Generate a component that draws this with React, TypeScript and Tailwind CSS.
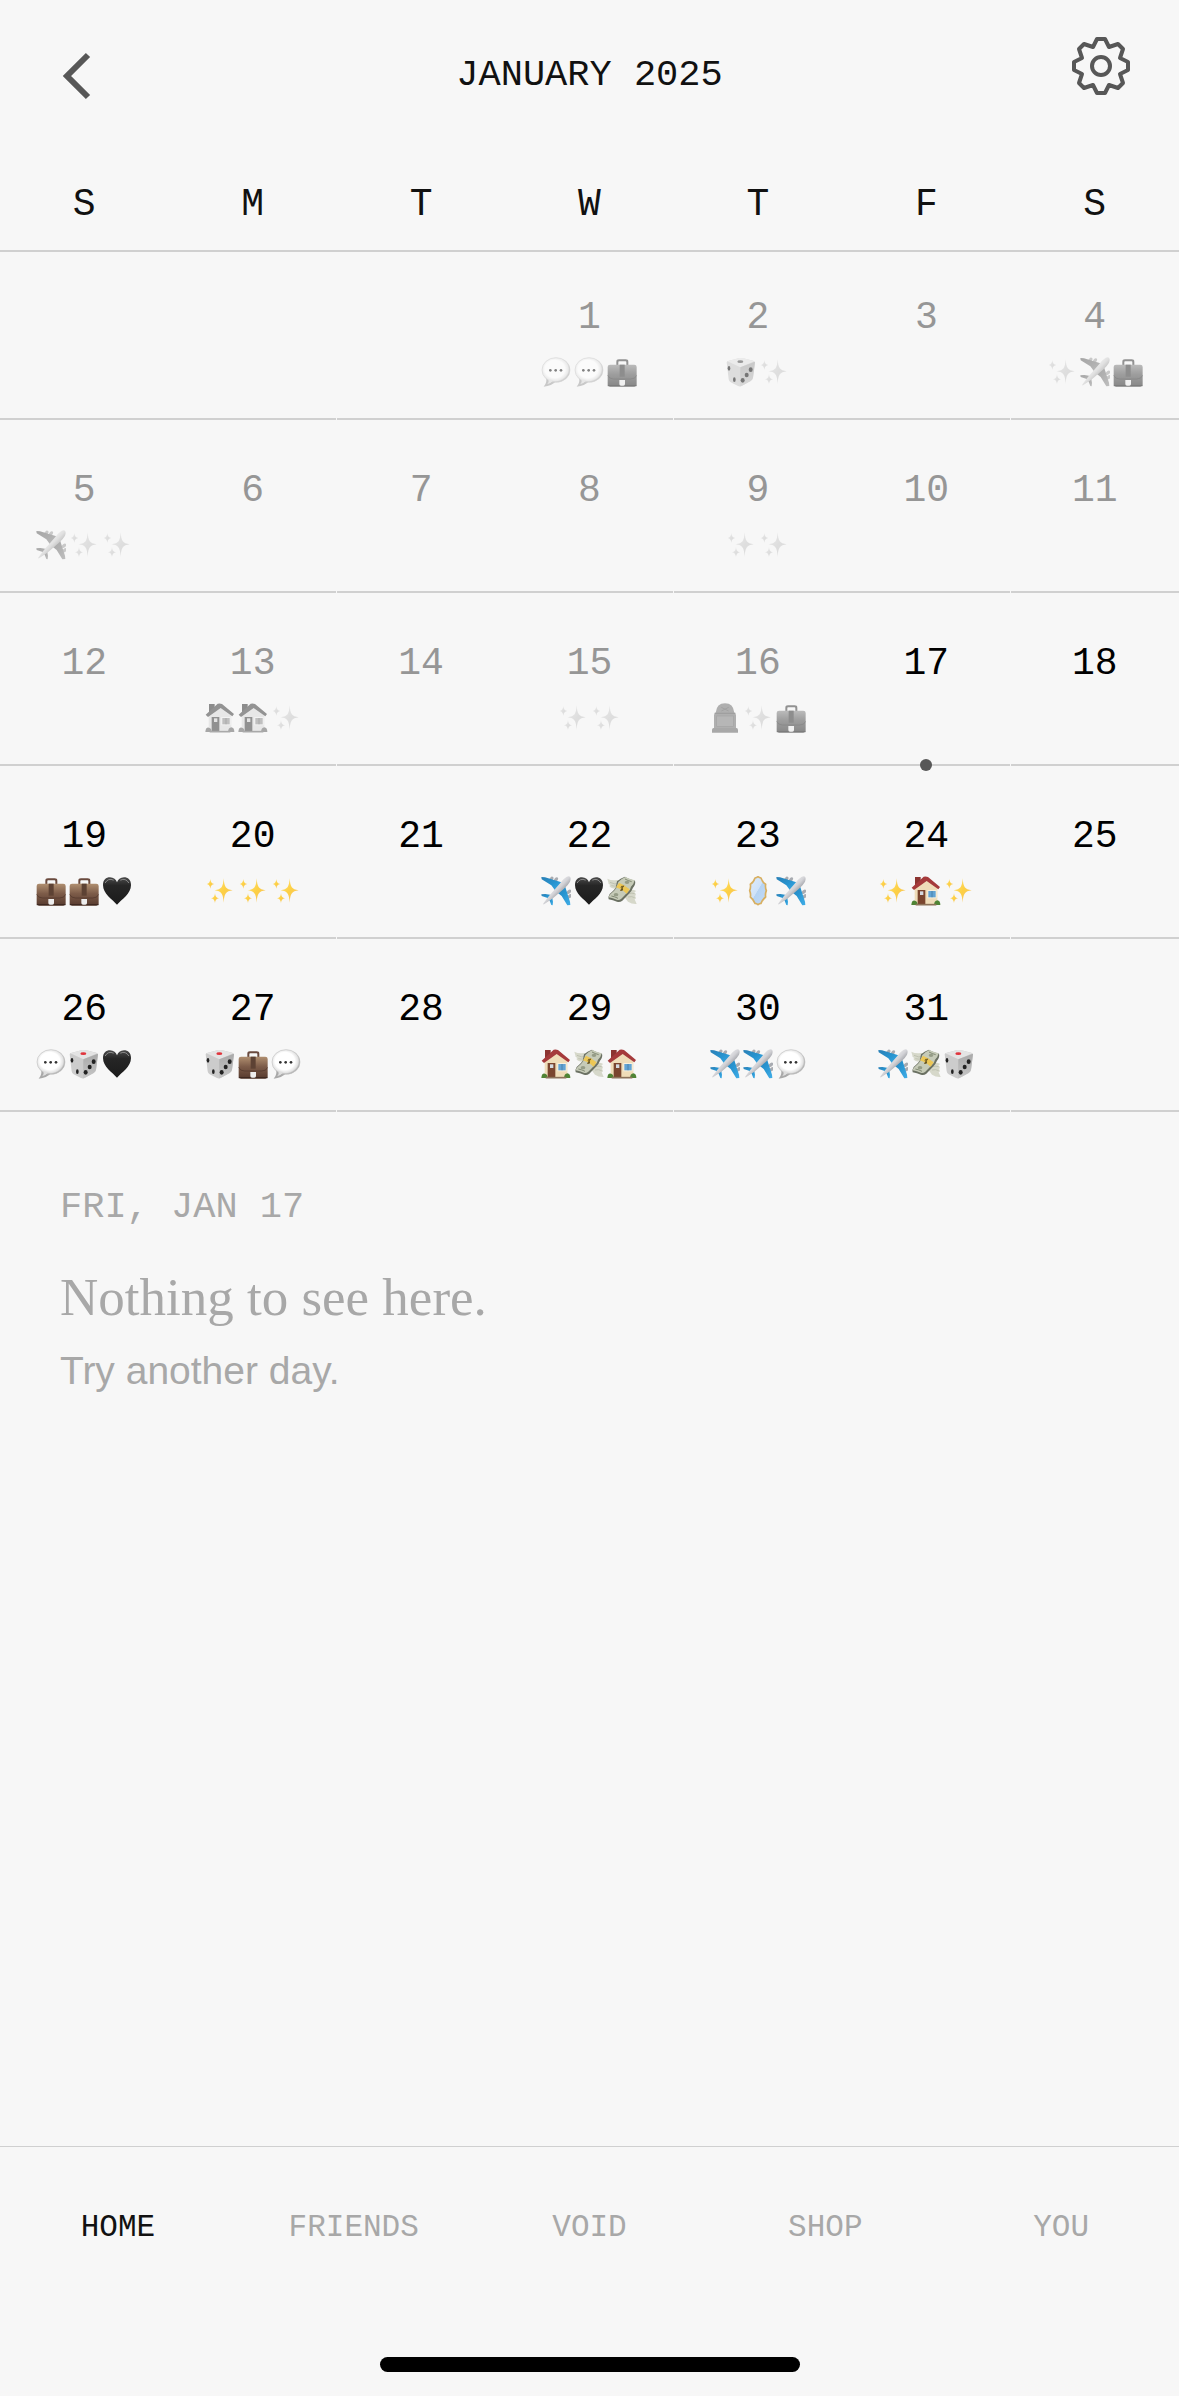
import type { ReactNode } from "react";

type Mark = "bubble" | "case" | "dice" | "sparkles" | "plane" | "house" | "grave" | "heart" | "money" | "mirror";

const WEEKDAYS = ["S", "M", "T", "W", "T", "F", "S"];
const WEEKDAY_NAMES = ["Sunday", "Monday", "Tuesday", "Wednesday", "Thursday", "Friday", "Saturday"];
const FIRST_WEEKDAY = 3;
const DAYS_IN_MONTH = 31;
const TODAY = 17;

const EVENTS: Record<number, Mark[]> = {
  1: ["bubble", "bubble", "case"],
  2: ["dice", "sparkles"],
  4: ["sparkles", "plane", "case"],
  5: ["plane", "sparkles", "sparkles"],
  9: ["sparkles", "sparkles"],
  13: ["house", "house", "sparkles"],
  15: ["sparkles", "sparkles"],
  16: ["grave", "sparkles", "case"],
  19: ["case", "case", "heart"],
  20: ["sparkles", "sparkles", "sparkles"],
  22: ["plane", "heart", "money"],
  23: ["sparkles", "mirror", "plane"],
  24: ["sparkles", "house", "sparkles"],
  26: ["bubble", "dice", "heart"],
  27: ["dice", "case", "bubble"],
  29: ["house", "money", "house"],
  30: ["plane", "plane", "bubble"],
  31: ["plane", "money", "dice"],
};

const TABS = ["HOME", "FRIENDS", "VOID", "SHOP", "YOU"];

/* Gradients shared by every event mark. */
function MarkGradients() {
  return (
    <svg width="0" height="0" className="absolute" aria-hidden="true">
      <defs>
        <linearGradient id="leather" x1="0" y1="0" x2="0" y2="1">
          <stop offset="0" stopColor="#b08f70" />
          <stop offset="0.45" stopColor="#7d5c49" />
          <stop offset="1" stopColor="#573a2e" />
        </linearGradient>
        <radialGradient id="speech" cx="0.46" cy="0.46" r="0.54">
          <stop offset="0.65" stopColor="#ffffff" />
          <stop offset="0.88" stopColor="#e2e2e2" />
          <stop offset="1" stopColor="#a9a9a9" />
        </radialGradient>
        <linearGradient id="ink" x1="0" y1="0" x2="0" y2="1">
          <stop offset="0" stopColor="#4a4a4a" />
          <stop offset="0.3" stopColor="#262626" />
          <stop offset="1" stopColor="#1b1b1b" />
        </linearGradient>
        <linearGradient id="wing" x1="0" y1="0" x2="1" y2="1">
          <stop offset="0" stopColor="#2a7fb5" />
          <stop offset="0.5" stopColor="#2794d0" />
          <stop offset="1" stopColor="#41aee8" />
        </linearGradient>
        <linearGradient id="hull" x1="0.3" y1="0.3" x2="0.7" y2="0.7">
          <stop offset="0" stopColor="#f1f1f2" />
          <stop offset="0.5" stopColor="#d2d2d6" />
          <stop offset="1" stopColor="#85888e" />
        </linearGradient>
        <linearGradient id="gold" x1="0" y1="0" x2="1" y2="1">
          <stop offset="0" stopColor="#ffe07a" />
          <stop offset="0.5" stopColor="#fdd043" />
          <stop offset="1" stopColor="#f5be70" />
        </linearGradient>
        <linearGradient id="glass" x1="0" y1="0" x2="1" y2="1">
          <stop offset="0.1" stopColor="#dbeafa" />
          <stop offset="0.48" stopColor="#cfe2f8" />
          <stop offset="0.5" stopColor="#b5d3f3" />
          <stop offset="1" stopColor="#c5dcf6" />
        </linearGradient>
        <linearGradient id="dieRight" x1="0" y1="0" x2="0" y2="1">
          <stop offset="0" stopColor="#a9a9a9" />
          <stop offset="1" stopColor="#c6c6c6" />
        </linearGradient>
      </defs>
    </svg>
  );
}

const DRAWINGS: Record<Mark, ReactNode> = {
  bubble: (
    <>
      <path d="M14 60 Q20 76 8 89 Q32 87 46 72Z" fill="#a9a9a9" />
      <ellipse cx="45" cy="39" rx="42" ry="37" fill="url(#speech)" stroke="#c2c2c2" strokeWidth="2" />
      <path d="M22 66 Q25 76 18 82 Q30 79 38 70Z" fill="#dedede" />
      <circle cx="28" cy="40" r="4" fill="#333" />
      <circle cx="44" cy="40" r="4" fill="#333" />
      <circle cx="60" cy="40" r="4" fill="#333" />
    </>
  ),
  case: (
    <>
      <path d="M31 24 V14 Q31 10 36 10 H56 Q61 10 61 14 V24" fill="none" stroke="#6a4a3e" strokeWidth="6" />
      <rect x="2" y="23" width="87" height="66" rx="7" fill="url(#leather)" />
      <path d="M2 55 Q6 66 20 66 H71 Q85 66 89 55" fill="none" stroke="#4f352b" strokeWidth="2" />
      <rect x="38" y="23" width="15" height="36" fill="#5d4234" />
      <path d="M2 86 H89" stroke="#3b261f" strokeWidth="3" />
      <path d="M37 69 H54 V81 Q54 86 49 86 H42 Q37 86 37 81Z" fill="#eeeeee" />
    </>
  ),
  dice: (
    <>
      <path d="M2 16 Q2 12 9 11 L40 3 Q46 2 52 4 L82 11 Q88 13 87 19 L81 62 Q80 68 74 72 L48 86 Q42 90 36 87 L14 76 Q9 73 8 67Z" fill="#cccccc" />
      <path d="M4 13 L40 3 Q46 2 52 4 L85 13 L43 31Z" fill="#e4e4e4" />
      <path d="M43 31 L87 14 L81 62 Q80 68 74 72 L48 86 Q45 88 42 88Z" fill="url(#dieRight)" />
      <ellipse cx="43" cy="14" rx="9" ry="4" fill="#e0343c" />
      <ellipse cx="9" cy="34" rx="4" ry="7" fill="#222" />
      <ellipse cx="25" cy="68" rx="4" ry="7" fill="#222" />
      <ellipse cx="74" cy="38" rx="6" ry="7" fill="#222" />
      <ellipse cx="62" cy="54" rx="6" ry="7" fill="#222" />
      <ellipse cx="50" cy="70" rx="6" ry="7" fill="#222" />
    </>
  ),
  sparkles: (
    <g fill="url(#gold)">
      <path d="M56 7 C58 33 62 40 83 43 C62 46 58 53 56 80 C54 53 50 46 29 43 C50 40 54 33 56 7Z" />
      <path d="M16 9 C17 19 20 22 28 24 C20 26 17 29 16 38 C15 29 12 26 5 24 C12 22 15 19 16 9Z" />
      <path d="M30 51 C31 62 34 65 42 67 C34 69 31 72 30 82 C29 72 26 69 18 67 C26 65 29 62 30 51Z" />
    </g>
  ),
  plane: (
    <>
      <g fill="#a8abb1">
        <ellipse cx="31" cy="9" rx="5" ry="8" transform="rotate(40 31 9)" />
        <ellipse cx="45" cy="11" rx="5" ry="8" transform="rotate(40 45 11)" />
        <ellipse cx="84" cy="47" rx="5" ry="8" transform="rotate(50 84 47)" />
        <ellipse cx="86" cy="61" rx="5" ry="8" transform="rotate(50 86 61)" />
      </g>
      <g fill="url(#wing)">
        <path d="M1 3 L12 4 L66 20 L44 46 L31 28 L2 10Z" />
        <path d="M88 87 L87 77 L70 24 L44 46 L62 60 L79 88Z" />
        <path d="M1 55 L13 54 L36 58 L26 70 L18 65 L2 60Z" />
        <path d="M35 88 L36 77 L32 56 L21 66 L26 74 L31 87Z" />
      </g>
      <path d="M84 1 Q92 3 87 17 Q81 28 69 38 L34 68 L9 85 Q5 86 8 81 L24 60 L56 23 Q69 7 76 3 Q80 1 84 1Z" fill="url(#hull)" />
    </>
  ),
  house: (
    <>
      <path d="M12 3 H29 V25 L12 36Z" fill="#8c3431" />
      <path d="M11 38 L45 9 L79 36 V84 H11Z" fill="#efdcb8" />
      <path d="M2 35 L38 2 Q45 0 51 3 L87 33 L82 40 L47 15 L9 42Z" fill="#a53a3b" />
      <rect x="20" y="42" width="23" height="43" fill="#7a452e" />
      <rect x="27" y="46" width="10" height="11" fill="#d5dae0" />
      <rect x="49" y="42" width="28" height="25" fill="#f8efdc" />
      <rect x="52" y="45" width="22" height="19" fill="#63a4d4" />
      <path d="M63 45 V64" stroke="#3e7097" strokeWidth="2" />
      <path d="M1 87 Q2 72 12 74 Q20 76 20 87Z" fill="#4f8434" />
      <path d="M69 87 Q70 74 79 73 Q88 74 88 87Z" fill="#4f8434" />
      <path d="M14 86 H76" stroke="#8c7259" strokeWidth="5" />
    </>
  ),
  grave: (
    <>
      <path d="M12 78 V37 Q12 31 17 29 Q20 1 45 1 Q70 1 73 29 Q78 31 78 37 V78Z" fill="#808080" />
      <path d="M14 31 H76" stroke="#666" strokeWidth="4" />
      <rect x="20" y="39" width="50" height="31" fill="#8c8c8c" stroke="#6e6e6e" strokeWidth="2" />
      <path d="M34 13 L56 24 M56 13 L34 24" stroke="#6a6a6a" strokeWidth="3" />
      <path d="M6 89 V81 Q6 75 11 75 H79 Q84 75 84 81 V89Z" fill="#747474" />
    </>
  ),
  heart: (
    <>
      <path d="M45 86 C31 70 3 54 3 27 C3 12 12 4 24 4 C35 4 42 11 45 19 C48 11 55 4 66 4 C78 4 87 12 87 27 C87 54 59 70 45 86Z" fill="url(#ink)" />
      <path d="M10 20 Q18 5 34 12 M56 12 Q71 5 80 20" fill="none" stroke="#8a8a8a" strokeWidth="3" strokeLinecap="round" />
    </>
  ),
  money: (
    <>
      <path d="M1 8 Q12 14 32 12 L45 22 L30 38 Q14 40 7 30 L10 27 Q2 24 4 19Z" fill="#d6d8ca" />
      <path d="M89 84 Q75 85 63 77 L52 62 L63 44 Q75 38 88 45 L82 49 Q90 56 84 60 Q90 68 83 70Z" fill="#d6d8ca" />
      <path d="M9 19 Q22 26 36 23 M13 29 Q23 32 34 29 M64 53 Q75 50 83 53 M63 63 Q74 60 83 65" stroke="#b4b7a5" strokeWidth="2" fill="none" />
      <path d="M30 16 Q42 6 54 2 Q62 8 84 14 Q87 24 78 35 Q74 46 66 53 L46 74 Q38 80 30 77 Q18 72 5 70 Q2 64 8 54 Q18 46 26 36Z" fill="#6b7163" />
      <path d="M34 18 Q44 7 55 3 Q66 9 83 13 Q81 24 72 32 Q70 42 62 49 L43 68 Q36 74 29 71 Q18 66 5 64 Q5 58 14 51 Q22 45 28 36Z" fill="#c6cbb8" />
      <path d="M54 9 Q63 14 74 17 M13 60 Q24 62 33 67" stroke="#838b75" strokeWidth="3" fill="none" />
      <ellipse cx="60" cy="19" rx="7" ry="5" fill="#959c86" />
      <ellipse cx="27" cy="56" rx="7" ry="5" fill="#959c86" />
      <path d="M36 20 Q52 26 68 40 L59 53 Q44 39 27 34Z" fill="#ecc756" />
      <path d="M50 31 Q41 29 42 35 Q50 38 46 43 L40 42 M50 29 L41 45" fill="none" stroke="#6b571f" strokeWidth="3" />
    </>
  ),
  mirror: (
    <>
      <path d="M36 6 Q41 5 45 2 Q49 5 54 6 Q59 20 68 25 Q66 34 70 44 Q66 54 68 63 Q59 70 54 82 Q49 82 45 86 Q41 82 36 82 Q31 70 22 63 Q24 54 20 44 Q24 34 22 25 Q31 20 36 6Z" fill="url(#glass)" stroke="#d8af60" strokeWidth="5" strokeLinejoin="round" />
    </>
  ),
};

function EventMark({ name }: { name: Mark }) {
  return (
    <svg viewBox="0 0 90 90" className="h-[30px] w-[30px] shrink-0" role="img" aria-label={name}>
      {DRAWINGS[name]}
    </svg>
  );
}

function GearIcon() {
  return (
    <svg viewBox="-30 -30 60 60" className="h-[60px] w-[60px]" fill="none" stroke="#575757" strokeWidth="4" strokeLinejoin="round" aria-hidden="true">
      <path d="M-8 -19 L-4 -27 H4 L8 -19 L17 -22 L22 -17 L19 -8 L27 -4 V4 L19 8 L22 17 L17 22 L8 19 L4 27 H-4 L-8 19 L-17 22 L-22 17 L-19 8 L-27 4 V-4 L-19 -8 L-22 -17 L-17 -22 Z" />
      <circle r="9" />
    </svg>
  );
}

function ChevronIcon() {
  return (
    <svg viewBox="0 0 30 50" className="h-[50px] w-[30px]" fill="none" stroke="#575757" strokeWidth="6" aria-hidden="true">
      <path d="M27 4 L6 25 L27 46" />
    </svg>
  );
}

function Day({ day, column, firstRow }: { day: number; column: number; firstRow: boolean }) {
  const inMonth = day >= 1 && day <= DAYS_IN_MONTH;
  const past = day < TODAY;
  const events = EVENTS[day] ?? [];
  return (
    <td className="relative p-0 align-bottom">
      {inMonth ? (
        <button
          type="button"
          className={"flex w-full flex-col items-center gap-[19px] pb-[31px] " + (firstRow ? "pt-[46px] " : "pt-[51px] ") + (past ? "text-[#969696]" : "text-black")}
        >
          <span className="text-[38px] leading-[40px]">{day}</span>
          <span className={"flex h-[30px] justify-center gap-[3px] " + (past ? "opacity-60 grayscale" : "")}>
            {events.map((name, i) => (
              <EventMark key={i} name={name} />
            ))}
          </span>
        </button>
      ) : null}
      <div className={"h-0.5 bg-[#d0d0d0] " + (column % 2 === 1 ? "mr-px" : "")} />
      {day === TODAY ? <span className="absolute -bottom-[5px] left-1/2 h-3 w-3 -translate-x-1/2 rounded-full bg-[#575757]" /> : null}
    </td>
  );
}

export default function App() {
  return (
    <div className="flex min-h-screen flex-col bg-[#f7f7f7] font-['Liberation_Mono',monospace] text-[#111111]">
      <MarkGradients />
      <header className="grid h-[150px] grid-cols-[1fr_auto_1fr] items-center px-12">
        <button type="button" aria-label="Back" className="justify-self-start pt-0.5 pl-[13px]">
          <ChevronIcon />
        </button>
        <h1 className="text-[37px] leading-[40px]">JANUARY 2025</h1>
        <button type="button" aria-label="Settings" className="justify-self-end pb-[18px]">
          <GearIcon />
        </button>
      </header>

      <table className="w-full table-fixed border-collapse">
        <thead>
          <tr>
            {WEEKDAYS.map((label, i) => (
              <th key={i} scope="col" abbr={WEEKDAY_NAMES[i]} className="p-0 text-[38px] leading-[40px] font-normal">
                <div className="pt-[35px] pb-[25px]">{label}</div>
                <div className="h-0.5 bg-[#d0d0d0]" />
              </th>
            ))}
          </tr>
        </thead>
        <tbody>
          {[0, 1, 2, 3, 4].map((week) => (
            <tr key={week}>
              {WEEKDAYS.map((_, column) => (
                <Day key={column} day={week * 7 + column - FIRST_WEEKDAY + 1} column={column} firstRow={week === 0} />
              ))}
            </tr>
          ))}
        </tbody>
      </table>

      <main className="flex-1 px-[60px] pt-[75px] text-[#a8a8a8]">
        <p className="text-[37px] leading-[40px]">FRI, JAN 17</p>
        <h2 className="mt-10 font-['Liberation_Serif',serif] text-[53px] leading-[60px]">Nothing to see here.</h2>
        <p className="mt-5 font-['Liberation_Sans',sans-serif] text-[39px] leading-[48px]">Try another day.</p>
      </main>

      <nav className="border-t border-[#d0d0d0] pt-[61px] pb-6" aria-label="Main">
        <div className="grid grid-cols-5 text-center text-[31px] leading-[40px]">
          {TABS.map((tab, i) => (
            <a key={tab} href={"#" + tab.toLowerCase()} className={i === 0 ? "text-[#111111]" : "text-[#a8a8a8]"} aria-current={i === 0 ? "page" : undefined}>
              {tab}
            </a>
          ))}
        </div>
        <div className="mx-auto mt-[109px] h-[15px] w-[420px] rounded-full bg-black" />
      </nav>
    </div>
  );
}
